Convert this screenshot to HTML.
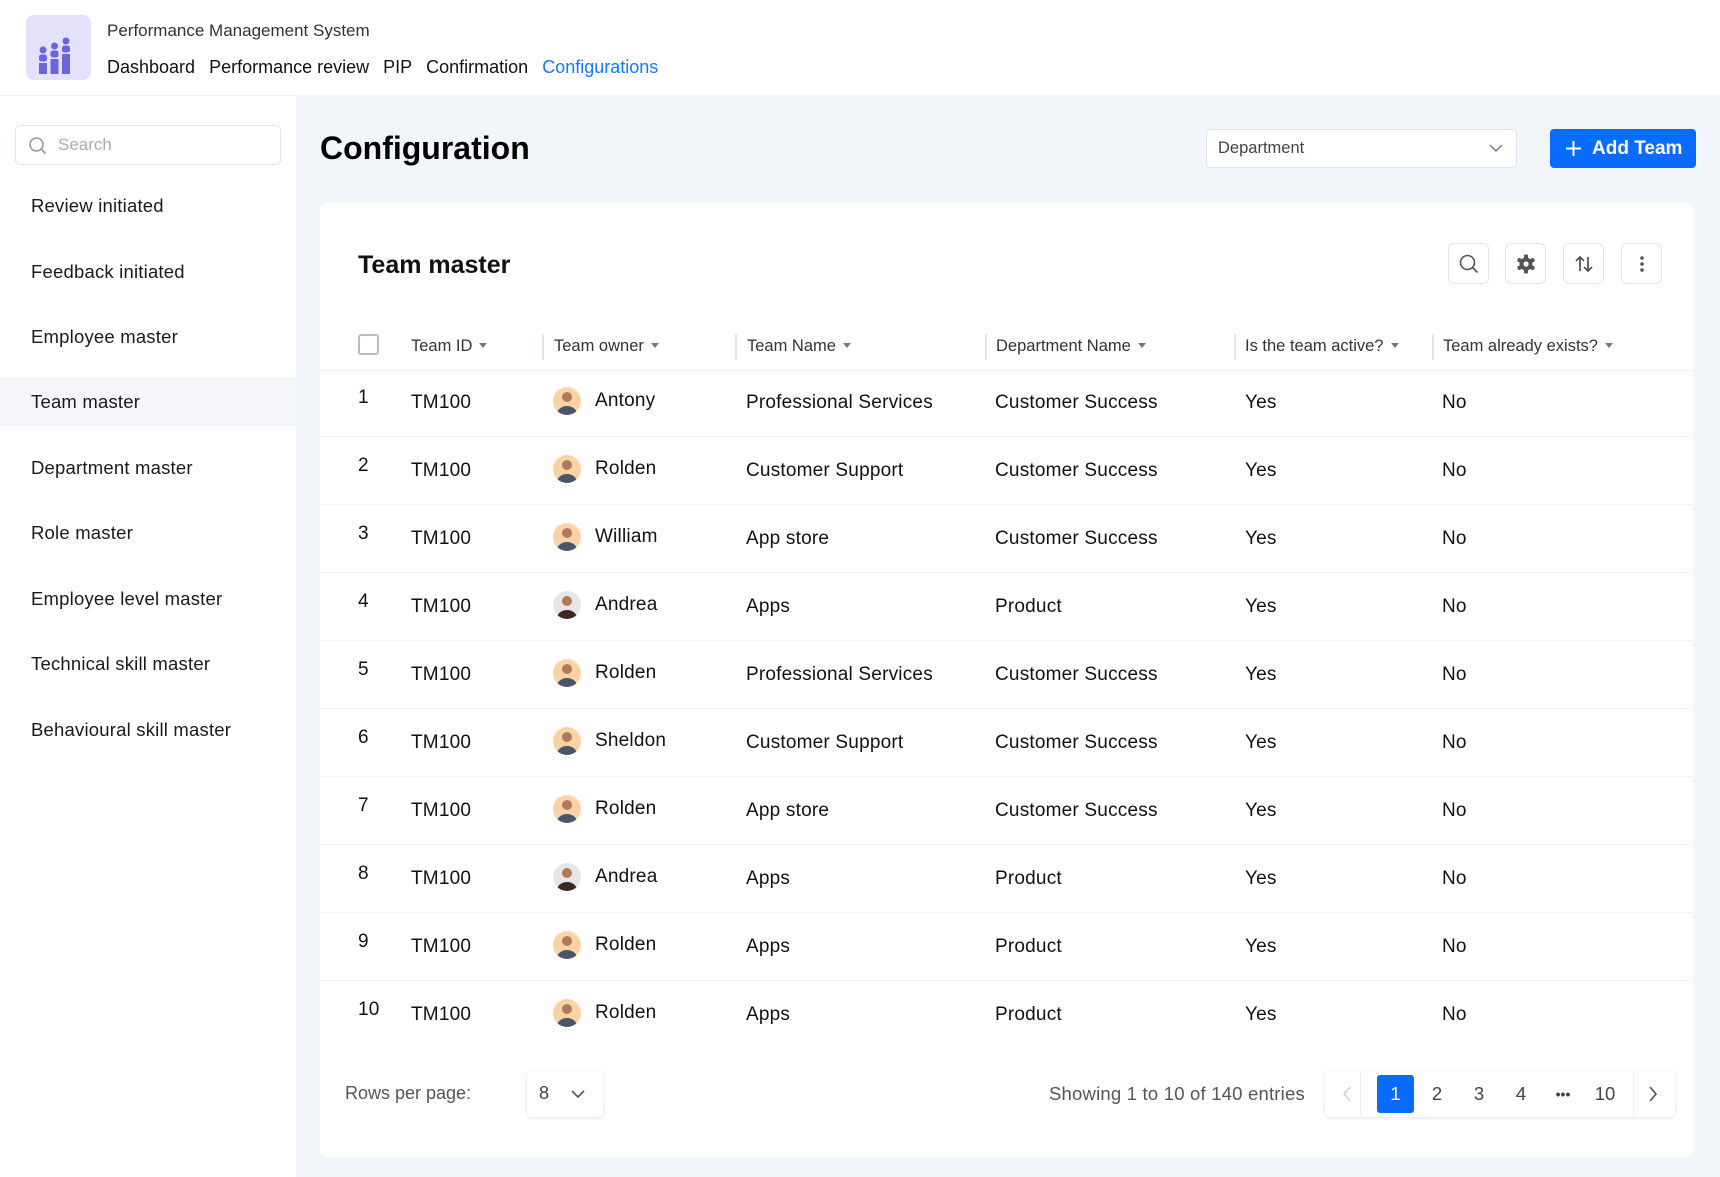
<!DOCTYPE html>
<html><head><meta charset="utf-8"><style>
*{box-sizing:border-box;margin:0;padding:0}
body{width:1720px;height:1177px;position:relative;overflow:hidden;background:#f2f5fa;font-family:"Liberation Sans",sans-serif;color:#111}
.a{position:absolute;white-space:nowrap}
.hdr{left:0;top:0;width:1720px;height:95px;background:#fff}
.side{left:0;top:95px;width:296px;height:1082px;background:#fff;border-top:1px solid #eef1f6}
.si{left:31px;font-size:18.5px;color:#1a1a1a;transform:translateY(-50%);letter-spacing:.2px}
.card{left:320px;top:202px;width:1373px;height:956px;background:#fff;border-radius:8px}
.ib{width:41px;height:41px;border:1.5px solid #dfe3ea;border-radius:6px;top:243px;background:#fff;display:flex;align-items:center;justify-content:center}
.th{top:337px;font-size:16.5px;color:#333}
.car{display:inline-block;width:0;height:0;border-left:4px solid transparent;border-right:4px solid transparent;border-top:5px solid #777;margin-left:7px;vertical-align:3px}
.sep{top:334px;width:1.5px;height:26px;background:#e3e6ec}
.rt{font-size:19px;font-weight:500;color:#111;transform:translateY(-50%);letter-spacing:.2px}
.line{left:320px;width:1373px;height:1px;background:#edf0f4}
.av{width:28px;height:28px;border-radius:50%;background:#fbd2a6;overflow:hidden;transform:translateY(-50%)}
.pg{top:1071px;font-size:18.5px;color:#444;height:46px;line-height:46px;text-align:center}
</style></head><body>
<div class="a hdr"></div>
<div class="a" style="left:26px;top:15px;width:65px;height:65px;background:#e3e2fa;border-radius:8px">
<svg width="65" height="65" viewBox="0 0 65 65"><g fill="#6b65db">
<circle cx="17" cy="35" r="3.5"/><rect x="13" y="39.5" width="8" height="7" rx="2.5"/><rect x="13" y="48" width="8" height="11"/>
<circle cx="28.5" cy="31" r="3.5"/><rect x="24.5" y="35.5" width="8" height="7" rx="2.5"/><rect x="24.5" y="44" width="8" height="15"/>
<circle cx="40" cy="26" r="3.5"/><rect x="36" y="30.5" width="8" height="7" rx="2.5"/><rect x="36" y="39" width="8" height="20"/></g></svg></div>
<div class="a" style="left:107px;top:21px;font-size:17px;color:#333">Performance Management System</div>
<div class="a" style="left:107px;top:57px;font-size:18px;color:#111">Dashboard<span style="margin-left:14px">Performance review</span><span style="margin-left:14px">PIP</span><span style="margin-left:14px">Confirmation</span><span style="margin-left:14px;color:#1677ff">Configurations</span></div>

<div class="a side"></div>
<div class="a" style="left:15px;top:125px;width:266px;height:40px;border:1.5px solid #dfe3ea;border-radius:5px;background:#fff">
<svg class="a" style="left:12px;top:10px" width="20" height="20" viewBox="0 0 20 20"><circle cx="8.5" cy="8.5" r="6.5" fill="none" stroke="#999" stroke-width="1.6"/><path d="M13.5 13.5l4 4" stroke="#999" stroke-width="1.6"/></svg>
<div class="a" style="left:42px;top:9px;font-size:17px;color:#aab">Search</div></div>
<div class="a" style="left:0;top:377px;width:296px;height:49px;background:#f5f6f9"></div>
<div class="a si" style="top:206px">Review initiated</div>
<div class="a si" style="top:272px">Feedback initiated</div>
<div class="a si" style="top:337px">Employee master</div>
<div class="a si" style="top:402px">Team master</div>
<div class="a si" style="top:468px">Department master</div>
<div class="a si" style="top:533px">Role master</div>
<div class="a si" style="top:599px">Employee level master</div>
<div class="a si" style="top:664px">Technical skill master</div>
<div class="a si" style="top:730px">Behavioural skill master</div>

<div class="a" style="left:320px;top:130px;font-size:32px;font-weight:700;color:#000">Configuration</div>
<div class="a" style="left:1206px;top:129px;width:311px;height:39px;background:#fff;border:1.5px solid #dfe3ea;border-radius:4px">
<div class="a" style="left:11px;top:9px;font-size:16.5px;color:#444">Department</div>
<svg class="a" style="left:282px;top:14px" width="14" height="9" viewBox="0 0 14 9"><path d="M1 1l6 6 6-6" fill="none" stroke="#777" stroke-width="1.4"/></svg></div>
<div class="a" style="left:1550px;top:129px;width:146px;height:39px;background:#0a6cff;border-radius:4px;color:#fff;font-size:19px;font-weight:700">
<svg class="a" style="left:15px;top:11px" width="17" height="17" viewBox="0 0 17 17"><path d="M8.5 1v15M1 8.5h15" stroke="#fff" stroke-width="2"/></svg>
<div class="a" style="left:42px;top:9px">Add Team</div></div>

<div class="a card"></div>
<div class="a" style="left:358px;top:251px;font-size:25px;font-weight:700;color:#111">Team master</div>
<div class="a ib" style="left:1448px"><svg width="22" height="22" viewBox="0 0 22 22"><circle cx="9.5" cy="9.5" r="7" fill="none" stroke="#555" stroke-width="1.6"/><path d="M14.5 14.5l5 5" stroke="#555" stroke-width="1.6"/></svg></div>
<div class="a ib" style="left:1505px"><svg width="22" height="22" viewBox="0 0 22 22"><g fill="#555"><circle cx="11" cy="11" r="6.5"/><rect x="9" y="1.5" width="4" height="19" rx="1"/><rect x="9" y="1.5" width="4" height="19" rx="1" transform="rotate(60 11 11)"/><rect x="9" y="1.5" width="4" height="19" rx="1" transform="rotate(120 11 11)"/></g><circle cx="11" cy="11" r="2.6" fill="#fff"/></svg></div>
<div class="a ib" style="left:1563px"><svg width="22" height="22" viewBox="0 0 22 22"><path d="M7 18V4M3 8l4-4 4 4M15 4v14M11 14l4 4 4-4" fill="none" stroke="#555" stroke-width="1.8"/></svg></div>
<div class="a ib" style="left:1621px"><svg width="22" height="22" viewBox="0 0 22 22"><g fill="#555"><circle cx="11" cy="5" r="1.8"/><circle cx="11" cy="11" r="1.8"/><circle cx="11" cy="17" r="1.8"/></g></svg></div>

<div class="a" style="left:358px;top:334px;width:21px;height:21px;border:2px solid #b8bec8;border-radius:3px"></div>
<div class="a th" style="left:411px">Team ID<span class="car"></span></div>
<div class="a sep" style="left:542px"></div>
<div class="a th" style="left:554px">Team owner<span class="car"></span></div>
<div class="a sep" style="left:735px"></div>
<div class="a th" style="left:747px">Team Name<span class="car"></span></div>
<div class="a sep" style="left:985px"></div>
<div class="a th" style="left:996px">Department Name<span class="car"></span></div>
<div class="a sep" style="left:1234px"></div>
<div class="a th" style="left:1245px">Is the team active?<span class="car"></span></div>
<div class="a sep" style="left:1432px"></div>
<div class="a th" style="left:1443px">Team already exists?<span class="car"></span></div>
<div class="a line" style="top:370px"></div>

<div id="rows"></div>
<script>
var d=[["Antony","Professional Services","Customer Success"],["Rolden","Customer Support","Customer Success"],["William","App store","Customer Success"],["Andrea","Apps","Product"],["Rolden","Professional Services","Customer Success"],["Sheldon","Customer Support","Customer Success"],["Rolden","App store","Customer Success"],["Andrea","Apps","Product"],["Rolden","Apps","Product"],["Rolden","Apps","Product"]];
var h="";
d.forEach(function(r,i){var c=403+68*i;
h+='<div class="a rt" style="left:358px;top:'+(c-5)+'px;font-weight:400">'+(i+1)+'</div>';
h+='<div class="a rt" style="left:411px;top:'+c+'px">TM100</div>';
var sh=r[0]=="Andrea"?'#3a2a22':'#4a5568',bg=r[0]=="Andrea"?'#e6e6ea':'#fbd2a6';
h+='<div class="a av" style="left:553px;top:'+(c-2)+'px;background:'+bg+'"><svg width="28" height="28"><circle cx="14" cy="10" r="5" fill="#b07a5a"/><ellipse cx="14" cy="27" rx="10" ry="8" fill="'+sh+'"/></svg></div>';
h+='<div class="a rt" style="left:595px;top:'+(c-2)+'px">'+r[0]+'</div>';
h+='<div class="a rt" style="left:746px;top:'+c+'px">'+r[1]+'</div>';
h+='<div class="a rt" style="left:995px;top:'+c+'px">'+r[2]+'</div>';
h+='<div class="a rt" style="left:1245px;top:'+c+'px">Yes</div>';
h+='<div class="a rt" style="left:1442px;top:'+c+'px">No</div>';
if(i<9)h+='<div class="a line" style="top:'+(c+33)+'px"></div>';});
document.getElementById("rows").innerHTML=h;
</script>

<div class="a" style="left:345px;top:1083px;font-size:18px;color:#555">Rows per page:</div>
<div class="a" style="left:527px;top:1071px;width:76px;height:46px;background:#fff;border-radius:5px;box-shadow:0 1px 4px rgba(0,0,0,.12)">
<div class="a" style="left:12px;top:12px;font-size:18px;color:#444">8</div>
<svg class="a" style="left:44px;top:19px" width="14" height="9" viewBox="0 0 14 9"><path d="M1 1l6 6 6-6" fill="none" stroke="#555" stroke-width="1.6"/></svg></div>
<div class="a" style="left:1049px;top:1083px;font-size:18.5px;color:#555;letter-spacing:.2px">Showing 1 to 10 of 140 entries</div>
<div class="a" style="left:1325px;top:1071px;width:350px;height:46px;background:#fff;border-radius:6px;box-shadow:0 1px 4px rgba(0,0,0,.12)"></div>
<div class="a" style="left:1360px;top:1071px;width:1px;height:46px;background:#eef0f3"></div>
<div class="a" style="left:1633px;top:1071px;width:1px;height:46px;background:#eef0f3"></div>
<svg class="a" style="left:1342px;top:1086px" width="10" height="16" viewBox="0 0 10 16"><path d="M8 1L2 8l6 7" fill="none" stroke="#c5d3ea" stroke-width="1.6"/></svg>
<div class="a" style="left:1377px;top:1075px;width:37px;height:38px;background:#0a6cff;border-radius:3px;color:#fff;font-size:18.5px;line-height:38px;text-align:center">1</div>
<div class="a pg" style="left:1425px;width:24px">2</div>
<div class="a pg" style="left:1467px;width:24px">3</div>
<div class="a pg" style="left:1509px;width:24px">4</div>
<div class="a pg" style="left:1551px;width:24px;font-weight:700;font-size:14px">•••</div>
<div class="a pg" style="left:1591px;width:28px">10</div>
<svg class="a" style="left:1648px;top:1086px" width="10" height="16" viewBox="0 0 10 16"><path d="M2 1l6 7-6 7" fill="none" stroke="#555" stroke-width="1.6"/></svg>
</body></html>
